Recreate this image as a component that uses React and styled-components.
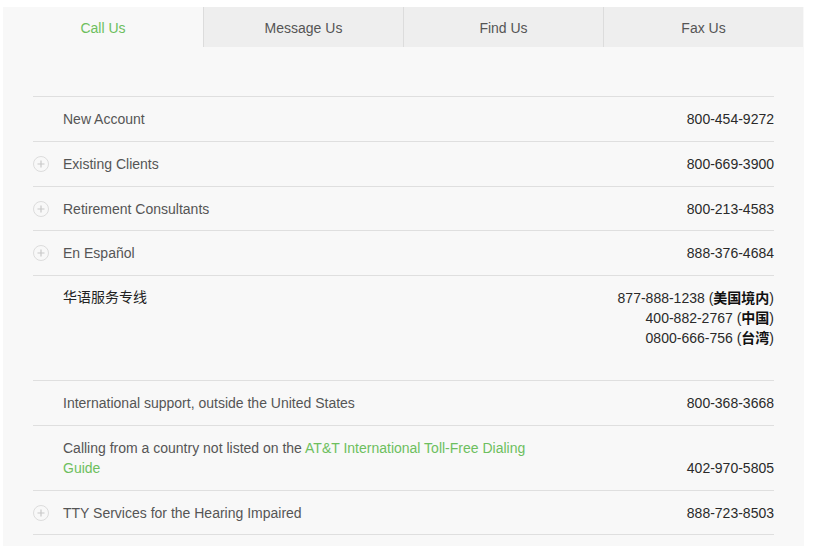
import React from 'react';
import styled, {createGlobalStyle} from 'styled-components';

const GlobalStyle = createGlobalStyle`
  body {
    margin: 0;
    background: #fff;
    font-family: "Liberation Sans", Arial, sans-serif;
  }
`

const Page = styled.div`
  padding: 7px 18px 0 3px;
`
const Panel = styled.div`
  width: 801px;
  background: #f8f8f8;
  padding-bottom: 24px;
`
const Tabs = styled.div`
  display: flex;
  height: 40px;
`
const Tab = styled.div`
  width: 200px;
  display: flex;
  align-items: center;
  justify-content: center;
  padding-top: 1px;
  font-size: 14px;
  color: ${p => p.active ? '#6dbf5e' : '#555'};
  background: ${p => p.active ? '#f8f8f8' : '#eeeeee'};
  border-left: ${p => p.active ? 'none' : '1px solid #dcdcdc'};
  box-sizing: border-box;
  cursor: pointer;
`
const List = styled.div`
  margin: 49px 30px 0 30px;
  border-top: 1px solid #dfdfdf;
`
const Row = styled.div`
  display: flex;
  justify-content: space-between;
  padding: 12px 0 ${p => p.tall ? '32px' : '11.75px'} 0;
  border-bottom: 1px solid #dfdfdf;
  font-size: 14px;
  line-height: 20px;
`
const Label = styled.div`
  position: relative;
  padding-left: 30px;
  max-width: 470px;
  font-family: ${p => p.cjk ? '"Noto Sans CJK SC", sans-serif' : '"Liberation Sans", Arial, sans-serif'};
  color: ${p => p.cjk ? '#222' : '#555'};
  margin-top: ${p => p.cjk ? '-2px' : '0'};
`
const Plus = styled.span`
  position: absolute;
  left: 0;
  top: 2px;
  width: 16px;
  height: 16px;
  display: flex;
`
const Link = styled.a`
  color: #6dbf5e;
  text-decoration: none;
`
const Number = styled.div`
  color: #2a2a2a;
  text-align: right;
  align-self: ${p => p.bottom ? 'flex-end' : 'flex-start'};
`
const Line = styled.div`
  height: 20px;
  white-space: nowrap;
  span {
    font-family: "Noto Sans CJK SC", sans-serif;
    font-weight: 700;
    color: #111;
    line-height: 20px;
    display: inline-block;
    vertical-align: top;
    height: 20px;
    margin-top: -1px;
  }
`

const PlusIcon = () => (
  <Plus>
    <svg width="16" height="16" viewBox="0 0 16 16">
      <circle cx="8" cy="8" r="7.5" fill="none" stroke="#dcdcdc" strokeWidth="1" />
      <path d="M8 4.5v7M4.5 8h7" stroke="#c8c8c8" strokeWidth="1.2" />
    </svg>
  </Plus>
)

const rows = [
  {label: 'New Account', num: '800-454-9272'},
  {label: 'Existing Clients', num: '800-669-3900', plus: true},
  {label: 'Retirement Consultants', num: '800-213-4583', plus: true},
  {label: 'En Español', num: '888-376-4684', plus: true},
]

const App = () => {
  const tabs = ['Call Us', 'Message Us', 'Find Us', 'Fax Us'];

  return (
    <Page>
      <GlobalStyle />
      <Panel>
        <Tabs>
          {tabs.map((t, i) => (
            <Tab key={t} active={i === 0}>{t}</Tab>
          ))}
        </Tabs>
        <List>
          {rows.map(r => (
            <Row key={r.label}>
              <Label>
                {r.plus && <PlusIcon />}
                {r.label}
              </Label>
              <Number>{r.num}</Number>
            </Row>
          ))}
          <Row tall>
            <Label cjk>华语服务专线</Label>
            <Number>
              <Line>877-888-1238 (<span>美国境内</span>)</Line>
              <Line>400-882-2767 (<span>中国</span>)</Line>
              <Line>0800-666-756 (<span>台湾</span>)</Line>
            </Number>
          </Row>
          <Row>
            <Label>International support, outside the United States</Label>
            <Number>800-368-3668</Number>
          </Row>
          <Row>
            <Label>
              Calling from a country not listed on the <Link href="#">AT&amp;T International Toll-Free Dialing Guide</Link>
            </Label>
            <Number bottom>402-970-5805</Number>
          </Row>
          <Row>
            <Label>
              <PlusIcon />
              TTY Services for the Hearing Impaired
            </Label>
            <Number>888-723-8503</Number>
          </Row>
        </List>
      </Panel>
    </Page>
  );
};

export default App;
